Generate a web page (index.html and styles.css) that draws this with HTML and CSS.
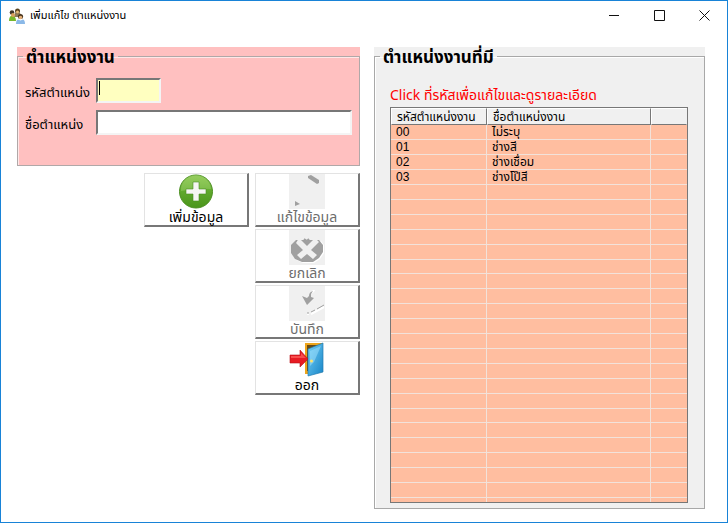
FILE: index.html
```html
<!DOCTYPE html>
<html lang="th">
<head>
    <meta charset="UTF-8">
    <meta name="viewport" content="width=device-width, initial-scale=1.0">
    <title>เพิ่มแก้ไข ตำแหน่งงาน</title>
    <link rel="stylesheet" href="styles.css">
</head>
<body>
    <div class="window">
        <header class="titlebar">
            <svg class="app-icon" width="16" height="16" viewBox="0 0 16 16" aria-hidden="true">
                <path d="M5 9 L6 5 H11 L13 9 Z" fill="#8b7a5c"/>
                <circle cx="8.500" cy="3" r="2.500" fill="#59431f"/>
                <circle cx="8.500" cy="4" r="1.500" fill="#e8bd7e"/>
                <circle cx="3" cy="4.500" r="2.300" fill="#3d3428"/>
                <path d="M0 13 Q0 8 3 7.500 Q7 8 7 13 Z" fill="#76b82c"/>
                <circle cx="4" cy="7" r="2" fill="#d9a05c"/>
                <circle cx="11.500" cy="8.500" r="2.600" fill="#4a3721"/>
                <circle cx="11.500" cy="9.500" r="1.800" fill="#e3ae78"/>
                <path d="M7 16 Q7 12 9 11.500 L11.500 12.500 L14 11.500 Q16 12 16 16 Z" fill="#8bb9e8"/>
            </svg>
            <h1>เพิ่มแก้ไข ตำแหน่งงาน</h1>
            <div class="window-controls">
                <button type="button" aria-label="Minimize"><svg width="11" height="11" viewBox="0 0 11 11"><path d="M0 5.500H10" stroke="#111"/></svg></button>
                <button type="button" aria-label="Maximize"><svg width="11" height="11" viewBox="0 0 11 11"><path d="M.5 .5H10.500V10.500H.5Z" fill="none" stroke="#111"/></svg></button>
                <button type="button" aria-label="Close"><svg width="11" height="11" viewBox="0 0 11 11"><path d="M.5 .5L10.500 10.500M10.500 .5L.5 10.500" stroke="#111"/></svg></button>
            </div>
        </header>

        <main class="content">
            <form class="editor">
                <div class="panel panel-pink">
                    <fieldset>
                        <legend>ตำแหน่งงาน</legend>
                        <div class="field">
                            <label for="code">รหัสตำแหน่ง</label>
                            <div class="code-wrap">
                                <input type="text" id="code" class="code">
                                <span class="caret"></span>
                            </div>
                        </div>
                        <div class="field">
                            <label for="name">ชื่อตำแหน่ง</label>
                            <input type="text" id="name" class="name">
                        </div>
                    </fieldset>
                </div>

                <div class="actions">
                    <button type="button" class="action add">
                        <svg width="36" height="35" viewBox="0 0 36 35">
                            <defs>
                                <linearGradient id="green" x1="0" y1="0" x2="0" y2="1">
                                    <stop offset="0" stop-color="#8cc751"/>
                                    <stop offset=".5" stop-color="#5fa82c"/>
                                    <stop offset="1" stop-color="#4a951b"/>
                                </linearGradient>
                            </defs>
                            <circle cx="18" cy="17.500" r="16.500" fill="url(#green)" stroke="#4c8f22"/>
                            <path d="M3 17 A15 15 0 0 1 33 15 Q18 14 3 17" fill="#a5d672" opacity=".4"/>
                            <path d="M15 8H21V15H28V20H21V27H15V20H8V15H15Z" fill="#f6f6f2" stroke="#4c8f22" stroke-width=".6"/>
                        </svg>
                        <span>เพิ่มข้อมูล</span>
                    </button>
                    <button type="button" class="action" disabled>
                        <svg width="36" height="35" viewBox="0 0 36 35">
                            <path d="M0 0H36V35H0Z" fill="#f0f0f0"/>
                            <path d="M19 2L22 1L30 6V9L28 10L19 4Z" fill="#a0a0a0"/>
                            <path d="M6 27L11 30L6 32Z" fill="#a0a0a0"/>
                        </svg>
                        <span>แก้ไขข้อมูล</span>
                    </button>
                    <button type="button" class="action" disabled>
                        <svg width="36" height="35" viewBox="0 0 36 35">
                            <path d="M0 0H36V35H0Z" fill="#f0f0f0"/>
                            <path d="M7 11H32L35 15V23L31 29L25 33H14L7 30L3 24Z" fill="#fff"/>
                            <path d="M7 10H30L34 15V22L30 28L24 32H13L6 29L2 23V15Z" fill="#a0a0a0"/>
                            <path d="M10 8L18 16L26 8L30 12L22 20L28 25L24 29L18 24L12 29L8 25L14 20L7 13Z" fill="#f0f0f0"/>
                            <path d="M15 9L18 11L20 9" fill="none" stroke="#a0a0a0" stroke-width="2"/>
                        </svg>
                        <span>ยกเลิก</span>
                    </button>
                    <button type="button" class="action" disabled>
                        <svg width="36" height="35" viewBox="0 0 36 35">
                            <path d="M0 0H36V35H0Z" fill="#f0f0f0"/>
                            <path d="M22 7Q25 5 25 4" fill="none" stroke="#fff" stroke-width="2"/>
                            <path d="M13 10L18 12L20 10Q20 6 24 5L22 8V11L25 12L18 19Z" fill="#a0a0a0"/>
                            <path d="M18 28H20M22 28L35 21" stroke="#fff" stroke-width="2"/>
                            <path d="M18 27H20M22 26L26 24M28 23L35 19" stroke="#a0a0a0"/>
                        </svg>
                        <span>บันทึก</span>
                    </button>
                    <button type="button" class="action">
                        <svg width="36" height="35" viewBox="0 0 36 35">
                            <defs>
                                <linearGradient id="blue" x1="0" y1="0" x2="1" y2="1">
                                    <stop offset="0" stop-color="#75cff5"/>
                                    <stop offset="1" stop-color="#1685c8"/>
                                </linearGradient>
                            </defs>
                            <path d="M16 1H34V30L19 32H16Z" fill="#eda51b"/>
                            <path d="M18 3H32V29H18Z" fill="#674b16"/>
                            <path d="M19 7L34 1V30L19 34Z" fill="url(#blue)" stroke="#237db3" stroke-width=".7"/>
                            <path d="M21 9L32 4L25 20L21 24Z" fill="#a3e3ff" opacity=".5"/>
                            <circle cx="22.500" cy="19" r="1.500" fill="#ffe36a"/>
                            <path d="M1 13H11V8L19 17L11 25V21H1Z" fill="#e71b23" stroke="#b51219" stroke-width=".6"/>
                            <path d="M2 14H12V11L17 16H2Z" fill="#ff625e" opacity=".7"/>
                        </svg>
                        <span>ออก</span>
                    </button>
                </div>
            </form>

            <section class="panel panel-list">
                <fieldset>
                    <legend>ตำแหน่งงานที่มี</legend>
                    <p class="hint">Click ที่รหัสเพื่อแก้ไขและดูรายละเอียด</p>
                    <table>
                        <thead>
                            <tr><th class="col-code">รหัสตำแหน่งงาน</th><th>ชื่อตำแหน่งงาน</th><th class="col-rest"></th></tr>
                        </thead>
                        <tbody>
                            <tr><td>00</td><td>ไม่ระบุ</td><td></td></tr>
                            <tr><td>01</td><td>ช่างสี</td><td></td></tr>
                            <tr><td>02</td><td>ช่างเชื่อม</td><td></td></tr>
                            <tr><td>03</td><td>ช่างโป๊สี</td><td></td></tr>
                            <tr><td></td><td></td><td></td></tr>
                            <tr><td></td><td></td><td></td></tr>
                            <tr><td></td><td></td><td></td></tr>
                            <tr><td></td><td></td><td></td></tr>
                            <tr><td></td><td></td><td></td></tr>
                            <tr><td></td><td></td><td></td></tr>
                            <tr><td></td><td></td><td></td></tr>
                            <tr><td></td><td></td><td></td></tr>
                            <tr><td></td><td></td><td></td></tr>
                            <tr><td></td><td></td><td></td></tr>
                            <tr><td></td><td></td><td></td></tr>
                            <tr><td></td><td></td><td></td></tr>
                            <tr><td></td><td></td><td></td></tr>
                            <tr><td></td><td></td><td></td></tr>
                            <tr><td></td><td></td><td></td></tr>
                            <tr><td></td><td></td><td></td></tr>
                            <tr><td></td><td></td><td></td></tr>
                            <tr><td></td><td></td><td></td></tr>
                            <tr><td></td><td></td><td></td></tr>
                            <tr><td></td><td></td><td></td></tr>
                            <tr><td></td><td></td><td></td></tr>
                            <tr class="last"><td></td><td></td><td></td></tr>
                        </tbody>
                    </table>
                </fieldset>
            </section>
        </main>
    </div>
</body>
</html>
```

FILE: styles.css
```css
* {
    box-sizing: border-box;
}
body {
    margin: 0;
    font-family: "Noto Sans", "Noto Sans Thai", sans-serif;
    font-size: 12px;
    color: #000;
}
button, input {
    font: inherit;
}
.window {
    min-height: 100vh;
    border: 1px solid #1883d7;
    background-color: #fff;
}
.titlebar {
    display: flex;
    align-items: center;
    height: 29px;
    padding-left: 8px;
}
h1 {
    margin: 0 0 0 5px;
    font-size: 11px;
    font-weight: normal;
}
.window-controls {
    display: flex;
    margin-left: auto;
}
.window-controls button {
    display: flex;
    align-items: center;
    justify-content: center;
    width: 45px;
    height: 28px;
    padding: 0;
    border: none;
    background: none;
}
.content {
    display: grid;
    grid-template-columns: 343fr 331fr;
    gap: 14px;
    padding: 17px 22px 13px 16px;
}
.panel {
    display: flex;
}
.panel-pink {
    height: 119px;
    background-color: #ffc0c0;
}
.panel-list {
    height: 462px;
    background-color: #f0f0f0;
}
fieldset {
    flex: 1;
    min-width: 0;
    margin: 0;
    padding: 0 7px;
    border: 1px solid #a8a8a8;
    box-shadow: inset 1px 1px 0 #fff;
}
.panel-pink fieldset {
    border-color: #b0a8a8;
    box-shadow: inset 1px 1px 0 #ffe8e8;
}
legend {
    height: 19px;
    margin-left: -2px;
    padding: 0 3px;
    font-size: 17px;
    font-weight: bold;
    line-height: 19px;
}
.field {
    display: flex;
    align-items: center;
    height: 32px;
}
.field:first-of-type {
    margin-top: 8px;
}
label {
    width: 71px;
    padding-top: 6px;
    font-size: 13px;
    white-space: nowrap;
}
input {
    height: 25px;
    padding: 0 4px;
    border: 2px solid;
    border-color: #777 #f4f4f4 #f4f4f4 #777;
    outline: none;
}
.code-wrap {
    position: relative;
    display: flex;
}
.code {
    width: 65px;
    background-color: #ffffc0;
}
.name {
    flex: 1;
    min-width: 0;
}
.caret {
    position: absolute;
    left: 3px;
    top: 3px;
    width: 1px;
    height: 14px;
    background-color: #000;
}
.actions {
    display: grid;
    grid-template-columns: 105px 105px;
    justify-content: end;
    gap: 2px 6px;
    margin-top: 7px;
}
.action {
    display: flex;
    flex-direction: column;
    align-items: center;
    grid-column: 2;
    height: 54px;
    padding: 0;
    border: solid;
    border-width: 1px 2px 2px 1px;
    border-color: #e3e3e3 #777 #777 #e3e3e3;
    background-color: #fff;
    color: #000;
    font-size: 14px;
    line-height: 15px;
}
.action.add {
    grid-column: 1;
}
.action svg {
    flex-shrink: 0;
}
.action:disabled {
    color: #6d6d6d;
}
.hint {
    margin: 20px 0 3px 8px;
    color: #ff0000;
    font-size: 14px;
    line-height: 18px;
}
table {
    width: calc(100% - 17px);
    margin: 0 8px;
    border: 1px solid #777;
    border-collapse: separate;
    border-spacing: 0;
    table-layout: fixed;
    background-color: #ffbea0;
}
th {
    height: 17px;
    padding: 0 5px;
    border: 1px solid;
    border-color: #fff #777 #777 #fff;
    background-color: #f0f0f0;
    font-weight: normal;
    line-height: 14px;
    text-align: left;
    white-space: nowrap;
}
th:last-child {
    border-right-color: #f0f0f0;
}
.col-code {
    width: 96px;
}
.col-rest {
    width: 36px;
}
td {
    height: 15px;
    padding: 0 5px;
    border-right: 1px solid #f2e2da;
    border-bottom: 1px solid #f2e2da;
    font-family: "Liberation Sans", "Noto Sans Thai", sans-serif;
    line-height: 14px;
}
td:last-child {
    border-right: none;
}
tr:nth-child(10n) td {
    height: 14px;
}
.last td {
    height: 4px;
    border-bottom: none;
}
```
